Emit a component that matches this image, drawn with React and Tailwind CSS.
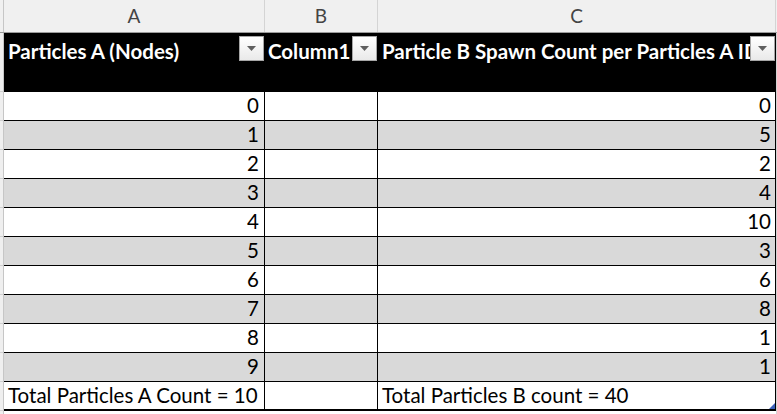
import React from "react";

const ROWS = [
  [0, 0],
  [1, 5],
  [2, 2],
  [3, 4],
  [4, 10],
  [5, 3],
  [6, 6],
  [7, 8],
  [8, 1],
  [9, 1],
];

const FilterButton = () => (
  <div className="absolute right-[1px] top-[3px] w-[25px] h-[25px] border border-[#a6a6a6] bg-gradient-to-b from-white to-[#e9e9e9] flex items-center justify-center">
    <svg width="9" height="5" viewBox="0 0 9 5">
      <path d="M0 0 L9 0 L4.5 5 Z" fill="#5f5f5f" />
    </svg>
  </div>
);

export default function App() {
  return (
    <div
      className="w-[777px] h-[414px] overflow-hidden bg-white flex flex-col"
      style={{ fontFamily: "Lato, 'Liberation Sans', sans-serif" }}
    >
      {/* column letters */}
      <div className="flex h-[33px] bg-[#f0f0f0] border-b border-[#9b9b9b] text-[#444] text-[19px]">
        <div className="w-[4px] border-r border-[#c6c6c6]" />
        <div className="w-[261px] border-r border-[#d4d4d4] flex items-center justify-center pt-[1px]">A</div>
        <div className="w-[113px] border-r border-[#d4d4d4] flex items-center justify-center pt-[1px]">B</div>
        <div className="w-[398px] border-r border-[#d4d4d4] flex items-center justify-center pt-[1px]">C</div>
      </div>

      <div className="flex flex-1">
        {/* row header strip */}
        <div className="w-[4px] bg-[#efefef] border-r border-[#c6c6c6] flex flex-col">
          <div className="h-[59px] border-b border-[#d0d0d0]" />
          {ROWS.map((r) => (
            <div key={r[0]} className="h-[29px] border-b border-[#d0d0d0]" />
          ))}
          <div className="h-[29px] border-b border-[#d0d0d0]" />
        </div>

        {/* table */}
        <div className="w-[772px] flex flex-col">
          <div className="flex h-[59px] bg-black text-white font-bold text-[20.5px] leading-none">
            <div className="relative w-[261px] pl-[4px] pt-[8px] whitespace-nowrap overflow-hidden">
              Particles A (Nodes)
              <FilterButton />
            </div>
            <div className="relative w-[113px] pl-[3px] pt-[8px] whitespace-nowrap overflow-hidden">
              Column1
              <FilterButton />
            </div>
            <div className="relative w-[398px] pl-[4px] pt-[8px] whitespace-nowrap overflow-hidden">
              Particle B Spawn Count per Particles A ID
              <FilterButton />
            </div>
          </div>

          {ROWS.map(([a, c], i) => (
            <div
              key={a}
              className={`flex h-[29px] border-b border-black text-[20.5px] leading-none text-black ${
                i % 2 === 1 ? "bg-[#d9d9d9]" : "bg-white"
              }`}
            >
              <div className="w-[261px] border-r border-black flex items-end justify-end pr-[5px] pb-[5px]">{a}</div>
              <div className="w-[113px] border-r border-black" />
              <div className="w-[398px] border-r border-black flex items-end justify-end pr-[4px] pb-[5px]">{c}</div>
            </div>
          ))}

          <div className="relative flex h-[29px] border-b-2 border-black text-[20.5px] leading-none text-black bg-white">
            <div className="w-[261px] border-r border-black flex items-end pl-[4px] pb-[4px] whitespace-nowrap">
              Total Particles A Count = 10
            </div>
            <div className="w-[113px] border-r border-black" />
            <div className="w-[398px] border-r border-black flex items-end pl-[4px] pb-[4px] whitespace-nowrap">
              Total Particles B count = 40
            </div>
            <svg className="absolute right-[1px] bottom-0" width="6" height="6" viewBox="0 0 6 6">
              <path d="M6 0 L6 6 L0 6 Z" fill="#3a5fb8" />
            </svg>
          </div>
        </div>
        <div className="w-[1px] bg-[#d4d4d4]" />
      </div>
    </div>
  );
}
